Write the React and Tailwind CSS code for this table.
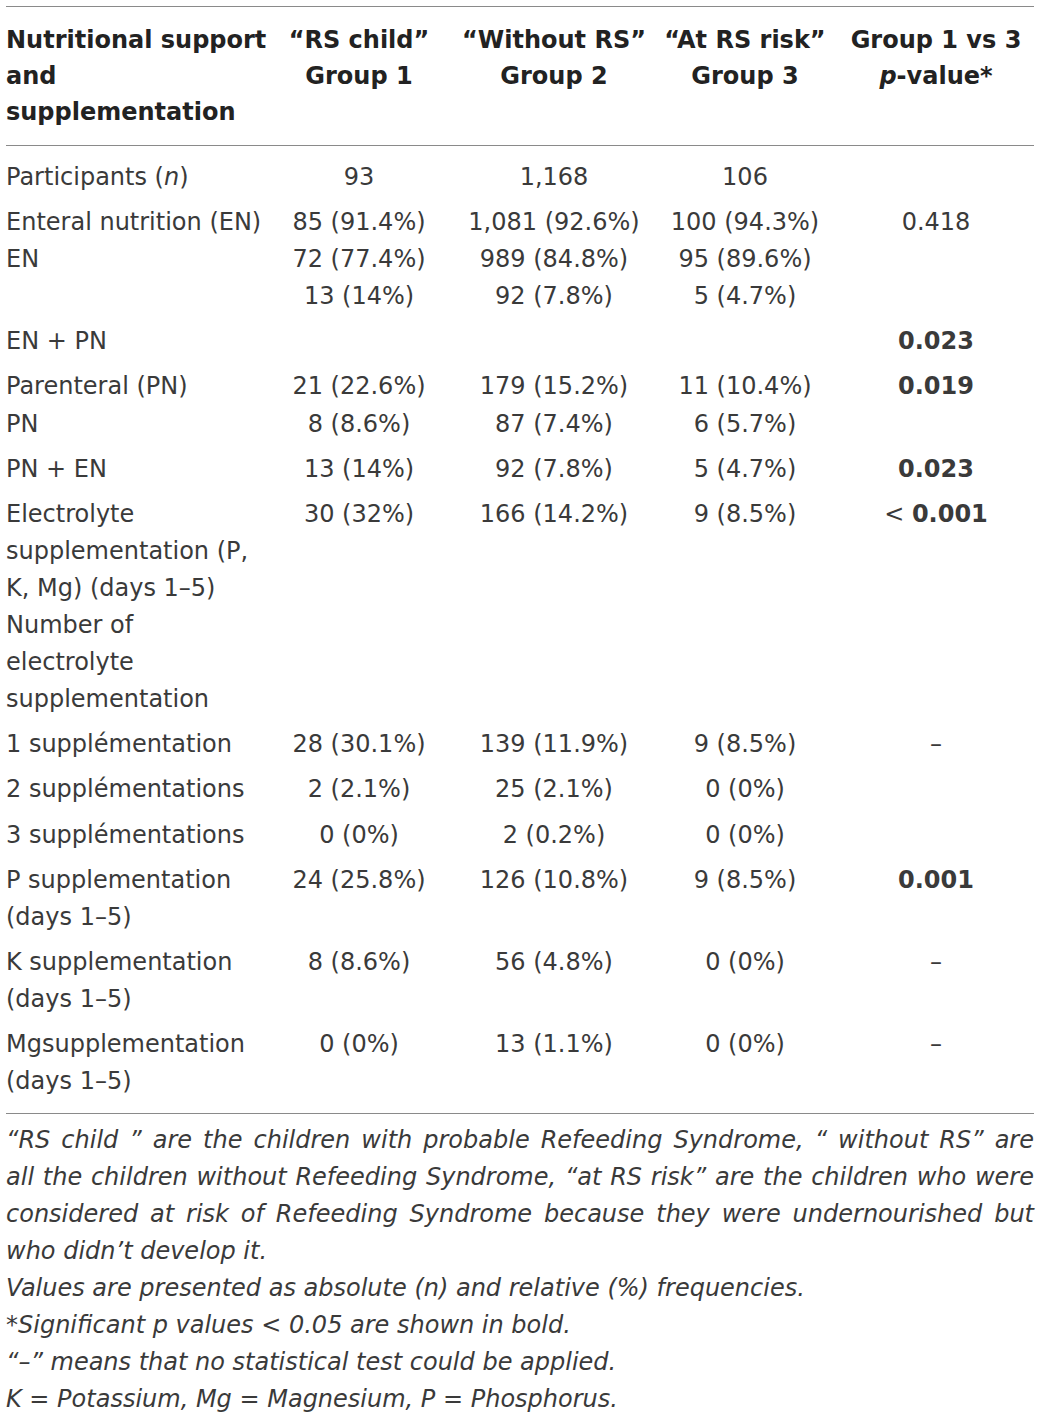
import React from "react";

const rows = [
  [[<>Participants (<i>n</i>)</>], ["93"], ["1,168"], ["106"], []],
  [
    ["Enteral nutrition (EN)", "EN"],
    ["85 (91.4%)", "72 (77.4%)", "13 (14%)"],
    ["1,081 (92.6%)", "989 (84.8%)", "92 (7.8%)"],
    ["100 (94.3%)", "95 (89.6%)", "5 (4.7%)"],
    ["0.418"],
  ],
  [["EN + PN"], [], [], [], [<b>0.023</b>]],
  [
    ["Parenteral (PN)", "PN"],
    ["21 (22.6%)", "8 (8.6%)"],
    ["179 (15.2%)", "87 (7.4%)"],
    ["11 (10.4%)", "6 (5.7%)"],
    [<b>0.019</b>],
  ],
  [["PN + EN"], ["13 (14%)"], ["92 (7.8%)"], ["5 (4.7%)"], [<b>0.023</b>]],
  [
    [
      "Electrolyte",
      "supplementation (P,",
      "K, Mg) (days 1–5)",
      "Number of",
      "electrolyte",
      "supplementation",
    ],
    ["30 (32%)"],
    ["166 (14.2%)"],
    ["9 (8.5%)"],
    [<>&lt; <b>0.001</b></>],
  ],
  [["1 supplémentation"], ["28 (30.1%)"], ["139 (11.9%)"], ["9 (8.5%)"], ["–"]],
  [["2 supplémentations"], ["2 (2.1%)"], ["25 (2.1%)"], ["0 (0%)"], []],
  [["3 supplémentations"], ["0 (0%)"], ["2 (0.2%)"], ["0 (0%)"], []],
  [
    ["P supplementation", "(days 1–5)"],
    ["24 (25.8%)"],
    ["126 (10.8%)"],
    ["9 (8.5%)"],
    [<b>0.001</b>],
  ],
  [["K supplementation", "(days 1–5)"], ["8 (8.6%)"], ["56 (4.8%)"], ["0 (0%)"], ["–"]],
  [["Mgsupplementation", "(days 1–5)"], ["0 (0%)"], ["13 (1.1%)"], ["0 (0%)"], ["–"]],
];

const cols = "grid grid-cols-[256px_194px_196px_186px_196px]";

const Cell = ({ lines, first }) => (
  <div className={first ? "text-left" : "text-center"}>
    {lines.map((line, i) => (
      <div key={i} className="whitespace-nowrap">
        {line}
      </div>
    ))}
  </div>
);

const App = () => {
  return (
    <div
      className="w-[1040px] h-[1420px] bg-white px-[6px] pt-[6px] text-[#3a3a3a] text-[24px]"
      style={{ fontFamily: '"DejaVu Sans", "Liberation Sans", sans-serif' }}
    >
      {/* Header */}
      <div className={`${cols} border-t border-b border-[#8a8a8a] pt-[15px] pb-[15px] leading-[36px] font-bold text-[#222222]`}>
        <Cell first lines={["Nutritional support", "and", "supplementation"]} />
        <Cell lines={["“RS child”", "Group 1"]} />
        <Cell lines={["“Without RS”", "Group 2"]} />
        <Cell lines={["“At RS risk”", "Group 3"]} />
        <Cell lines={["Group 1 vs 3", <><i>p</i>-value*</>]} />
      </div>

      {/* Body */}
      <div className="border-b border-[#8a8a8a] pt-[9px] pb-[9px] leading-[37.1px]">
        {rows.map((row, r) => (
          <div key={r} className={`${cols} py-[4px]`}>
            {row.map((lines, c) => (
              <Cell key={c} first={c === 0} lines={lines} />
            ))}
          </div>
        ))}
      </div>

      {/* Footnotes */}
      <div className="pt-[8px] leading-[37px] italic">
        <div className="whitespace-nowrap text-justify [text-align-last:justify]">
          “RS child ” are the children with probable Refeeding Syndrome, “ without RS” are
        </div>
        <div className="whitespace-nowrap text-justify [text-align-last:justify]">
          all the children without Refeeding Syndrome, “at RS risk” are the children who were
        </div>
        <div className="whitespace-nowrap text-justify [text-align-last:justify]">
          considered at risk of Refeeding Syndrome because they were undernourished but
        </div>
        <div>who didn’t develop it.</div>
        <div>Values are presented as absolute (n) and relative (%) frequencies.</div>
        <div>*Significant p values &lt; 0.05 are shown in bold.</div>
        <div>“–” means that no statistical test could be applied.</div>
        <div>K = Potassium, Mg = Magnesium, P = Phosphorus.</div>
      </div>
    </div>
  );
};

export default App;
